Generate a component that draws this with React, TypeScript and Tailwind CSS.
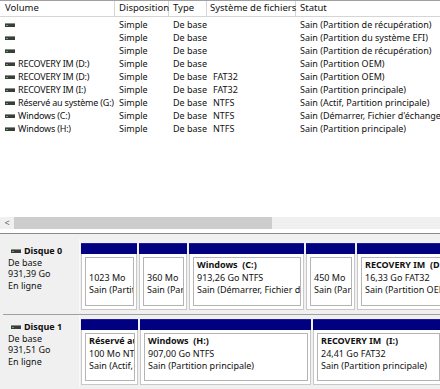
import React from "react";

// disk management volume list + graphical disk view

const rows = [
  { name: "", fs: "", status: "Sain (Partition de récupération)" },
  { name: "", fs: "", status: "Sain (Partition du système EFI)" },
  { name: "", fs: "", status: "Sain (Partition de récupération)" },
  { name: "RECOVERY IM (D:)", fs: "", status: "Sain (Partition OEM)" },
  { name: "RECOVERY IM (D:)", fs: "FAT32", status: "Sain (Partition OEM)" },
  { name: "RECOVERY IM (I:)", fs: "FAT32", status: "Sain (Partition principale)" },
  { name: "Réservé au système (G:)", fs: "NTFS", status: "Sain (Actif, Partition principale)" },
  { name: "Windows (C:)", fs: "NTFS", status: "Sain (Démarrer, Fichier d'échange, Vidage sur incident, Partition principale)" },
  { name: "Windows (H:)", fs: "NTFS", status: "Sain (Partition principale)" },
];

function DiskIcon() {
  return (
    <span className="inline-flex w-[10px] h-[4px] shrink-0 bg-[#3c3c3c] border-t border-[#8a8a8a] relative">
      <span className="absolute left-[1px] top-[1px] w-[2px] h-[1px] bg-[#3fbf3f]" />
    </span>
  );
}

type Part = { w: string; title?: string; size: string; status: string };

function Partition({ p }: { p: Part }) {
  return (
    <div className={`${p.w} flex flex-col shrink-0`}>
      <div className="h-[11px] bg-[#000080] border-t border-[#1c1c9c]" />
      <div className="flex-1 bg-white border-x border-b border-[#c8c8c8] p-[3px] pr-[2px]">
        <div className="h-full border border-[#b4b4b4] px-[3px] pt-[1px] overflow-hidden whitespace-nowrap leading-[12.5px]">
          <div className="font-bold h-[12.5px] whitespace-pre">{p.title ?? ""}</div>
          <div>{p.size}</div>
          <div>{p.status}</div>
        </div>
      </div>
    </div>
  );
}

function Disk({ label, size, parts, h }: { label: string; size: string; parts: Part[]; h: string }) {
  return (
    <div className={`flex ${h} pl-[3px]`}>
      <div className="w-[77px] shrink-0 border-r border-[#fafafa] pl-[5px] pt-[6px] leading-[11.5px]">
        <div className="flex items-center gap-[3px] font-bold text-[9px] pl-[3px]">
          <DiskIcon />
          {label}
        </div>
        <div>De base</div>
        <div>{size}</div>
        <div>En ligne</div>
      </div>
      <div className="flex gap-[2px] pt-[4px] pb-[2px] pl-[1px] overflow-hidden flex-1">
        {parts.map((p, i) => (
          <Partition key={i} p={p} />
        ))}
      </div>
    </div>
  );
}

export default function App() {
  const font = { fontFamily: '"Segoe UI", "Noto Sans", Arial, sans-serif' };
  return (
    <div className="w-[440px] h-[389px] overflow-hidden bg-[#f0f0f0] text-[9px] text-[#111]" style={font}>
      {/* volume list */}
      <div className="h-[233px] bg-white flex flex-col border-t border-[#a0a0a0]">
        <div className="flex h-[16px] border-b border-[#d5d5d5] items-center">
          <div className="w-[115px] pl-[5px] border-r border-[#d5d5d5] h-full flex items-center text-[9.5px]">Volume</div>
          <div className="w-[54px] pl-[4px] border-r border-[#d5d5d5] h-full flex items-center text-[9.5px]">Disposition</div>
          <div className="w-[38px] pl-[4px] border-r border-[#d5d5d5] h-full flex items-center text-[9.5px]">Type</div>
          <div className="w-[89px] pl-[3px] border-r border-[#d5d5d5] h-full flex items-center whitespace-nowrap text-[9.5px]">Système de fichiers</div>
          <div className="flex-1 pl-[4px] h-full flex items-center text-[9.5px]">Statut</div>
        </div>
        <div className="flex-1 pt-[1px]">
          {rows.map((r, i) => (
            <div key={i} className="flex h-[13px] items-center whitespace-nowrap">
              <div className="w-[115px] pl-[5px] pr-[2px] flex items-center gap-[3px] overflow-hidden">
                <DiskIcon />
                <span className="tracking-[-0.2px]">{r.name}</span>
              </div>
              <div className="w-[54px] pl-[4px]">Simple</div>
              <div className="w-[38px] pl-[4px]">De base</div>
              <div className="w-[89px] pl-[6px]">{r.fs}</div>
              <div className="flex-1 pl-[4px] overflow-hidden">{r.status}</div>
            </div>
          ))}
        </div>
        {/* horizontal scrollbar */}
        <div className="h-[12px] bg-[#f0f0f0] flex items-center mb-[4px]">
          <span className="w-[14px] text-center text-[9px] text-[#606060]">&lt;</span>
          <div className="w-[258px] h-full bg-[#cdcdcd]" />
        </div>
      </div>
      <div className="h-px bg-[#8a8a8a]" />

      {/* disk view */}
      <div className="pt-[5px]">
        <Disk
          label="Disque 0"
          size="931,39 Go"
          h="h-[73px]"
          parts={[
            { w: "w-[56px]", size: "1023 Mo", status: "Sain (Partition de récupération)" },
            { w: "w-[48px]", size: "360 Mo", status: "Sain (Partition du système EFI)" },
            { w: "w-[115px]", title: "Windows  (C:)", size: "913,26 Go NTFS", status: "Sain (Démarrer, Fichier d'échange" },
            { w: "w-[49px]", size: "450 Mo", status: "Sain (Partition de récupération)" },
            { w: "w-[90px]", title: "RECOVERY IM  (D:)", size: "16,33 Go FAT32", status: "Sain (Partition OEM)" },
          ]}
        />
        <div className="h-[2px]" />
        <div className="h-px bg-[#a0a0a0] ml-[3px]" />
        <Disk
          label="Disque 1"
          size="931,51 Go"
          h="h-[72px]"
          parts={[
            { w: "w-[57px]", title: "Réservé au système", size: "100 Mo NTFS", status: "Sain (Actif, Partition principale)" },
            { w: "w-[171px]", title: "Windows  (H:)", size: "907,00 Go NTFS", status: "Sain (Partition principale)" },
            { w: "w-[130px]", title: "RECOVERY IM  (I:)", size: "24,41 Go FAT32", status: "Sain (Partition principale)" },
          ]}
        />
      </div>
    </div>
  );
}
